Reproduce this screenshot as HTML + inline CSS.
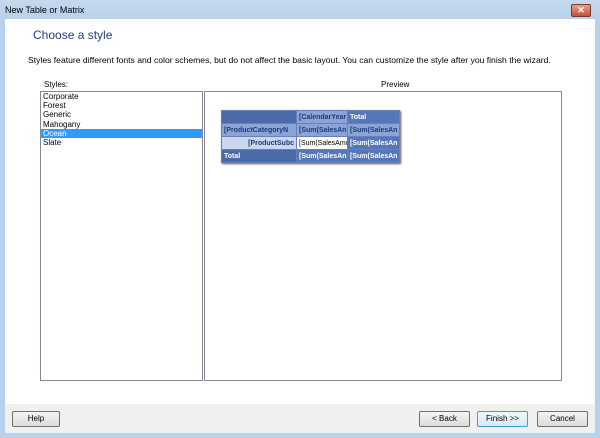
<!DOCTYPE html>
<html><head><style>
*{margin:0;padding:0;box-sizing:border-box}
body{width:600px;height:438px;background:#b9d1ea;font-family:"Liberation Sans",sans-serif;position:relative;overflow:hidden}
.abs{position:absolute}
.tbar{left:0;top:0;width:600px;height:19px;background:linear-gradient(#c5d9ef,#b9d1ea)}
.title{left:5px;top:5px;font-size:9px;color:#000}
.close{left:571px;top:4px;width:20px;height:13px;background:linear-gradient(#e8a090,#c8503a);border:1px solid #7a3a2a;border-radius:2px;color:#fff;font-size:9px;text-align:center;line-height:11px;font-weight:bold}
.client{left:5px;top:19px;width:590px;height:414px;background:#f0f0f0}
.white{left:5px;top:19px;width:590px;height:385px;background:#fff}
.h{left:33px;top:28px;font-size:12px;color:#1e3f78}
.desc{left:28px;top:55px;font-size:8.6px;color:#000;white-space:nowrap}
.lbl{font-size:8px;color:#000}
.list{left:40px;top:91px;width:163px;height:290px;border:1px solid #828790;background:#fff;font-size:8px}
.list div{height:9.2px;line-height:9px;padding-left:2px}
.sel{background:#3399ff;color:#fff}
.prev{left:204px;top:91px;width:358px;height:290px;border:1px solid #828790;background:#fff}
table{border-collapse:collapse;table-layout:fixed;width:178px;position:absolute;left:221px;top:110px;font-size:7px;font-weight:bold;box-shadow:1px 1px 2px #555}
td{height:13px;border:1px solid #6a80b8;overflow:hidden;white-space:nowrap;padding:0 2px;color:#fff}
.c1{width:75px}.c2{width:51px}.c3{width:52px}
.btn{top:411px;height:16px;border:1px solid #707070;border-radius:2px;background:linear-gradient(#f4f4f4,#dcdcdc);font-size:8px;text-align:center;line-height:14px}
</style></head><body>
<div class="abs tbar"></div>
<div class="abs title">New Table or Matrix</div>
<div class="abs close">✕</div>
<div class="abs client"></div>
<div class="abs white"></div>
<div class="abs h">Choose a style</div>
<div class="abs desc">Styles feature different fonts and color schemes, but do not affect the basic layout. You can customize the style after you finish the wizard.</div>
<div class="abs lbl" style="left:44px;top:80px">Styles:</div>
<div class="abs lbl" style="left:381px;top:80px">Preview</div>
<div class="abs list"><div>Corporate</div><div>Forest</div><div>Generic</div><div>Mahogany</div><div class="sel">Ocean</div><div>Slate</div></div>
<div class="abs prev"></div>
<table>
<colgroup><col style="width:75px"><col style="width:51px"><col style="width:52px"></colgroup>
<tr><td style="background:#4a6aa8"></td><td style="background:#8aa4d6;color:#1e3a7a">[CalendarYear</td><td style="background:#5577b8">Total</td></tr>
<tr><td style="background:#8aa4d6;color:#1e3a7a">[ProductCategoryN</td><td style="background:#8aa4d6;color:#1e3a7a">[Sum(SalesAn</td><td style="background:#8aa4d6;color:#1e3a7a">[Sum(SalesAn</td></tr>
<tr><td style="background:#c8d6ee;color:#1e3a7a;text-align:right">[ProductSubc</td><td style="background:#fff;color:#000;font-weight:normal">[Sum(SalesAmc</td><td style="background:#5577b8">[Sum(SalesAn</td></tr>
<tr><td style="background:#4a6aa8">Total</td><td style="background:#5577b8">[Sum(SalesAn</td><td style="background:#5577b8">[Sum(SalesAn</td></tr>
</table>
<div class="abs btn" style="left:12px;width:48px">Help</div>
<div class="abs btn" style="left:419px;width:51px">&lt; Back</div>
<div class="abs btn" style="left:477px;width:51px;border-color:#3c9fd0;background:linear-gradient(#f0f8fd,#d6eaf7)">Finish &gt;&gt;</div>
<div class="abs btn" style="left:537px;width:51px">Cancel</div>
</body></html>
